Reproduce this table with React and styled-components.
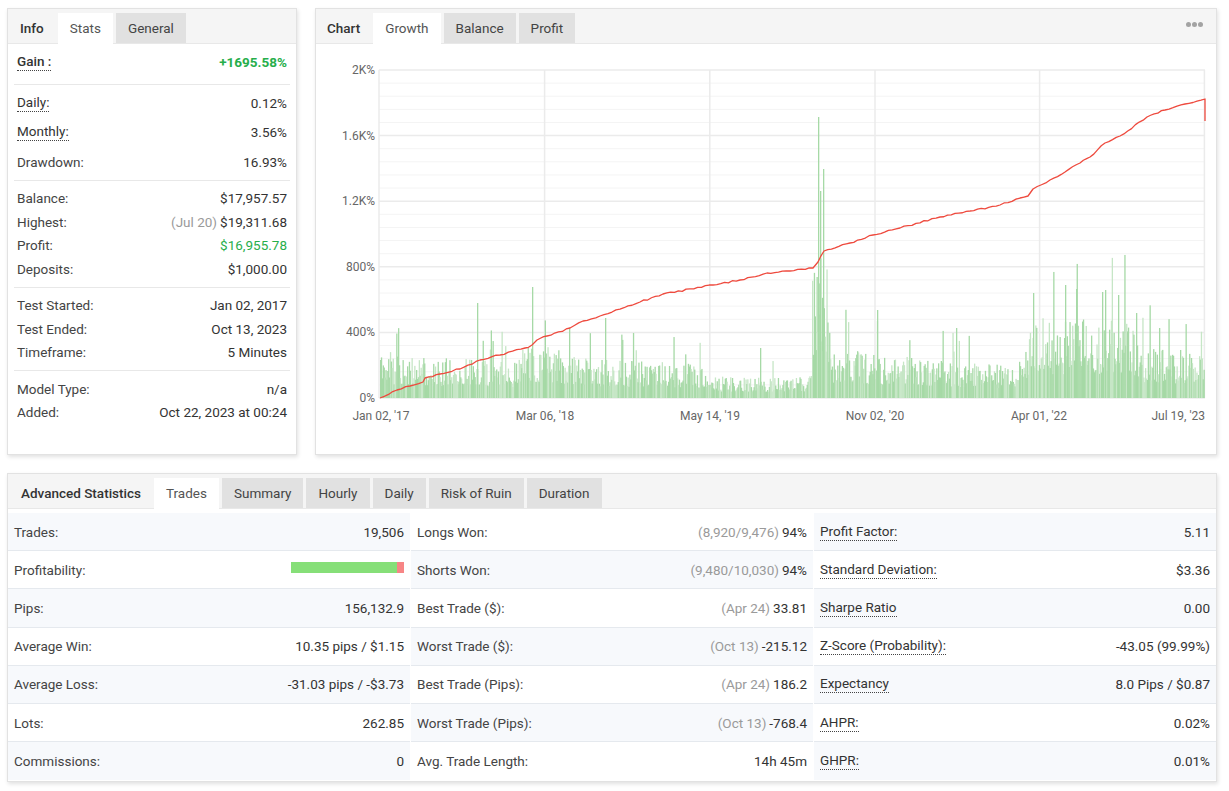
import React from "react";
import styled, { createGlobalStyle } from "styled-components";

const GlobalStyle = createGlobalStyle`
  body {
    margin: 0;
    background: #fff;
    font-family: Roboto, "Liberation Sans", Arial, sans-serif;
    font-size: 13.5px;
    color: #444;
  }
`;

const Page = styled.div`
  display: flex;
  flex-direction: column;
  gap: 18px;
  padding: 8px 12px 10px 7px;
`;

const TopRow = styled.div`
  display: grid;
  grid-template-columns: 290px 1fr;
  gap: 18px;
  height: 447px;
`;

const Card = styled.div`
  display: flex;
  flex-direction: column;
  min-width: 0;
  box-sizing: border-box;
  background: #fff;
  border: 1px solid #e2e2e2;
  box-shadow: 1px 2px 4px rgba(0, 0, 0, 0.12);
  ${(p) => p.$height && `height: ${p.$height}px;`}
`;

const TabBar = styled.div`
  display: flex;
  align-items: flex-end;
  flex-shrink: 0;
  height: 34px;
  background: #f5f5f5;
  border-bottom: 1px solid #e8e8e8;
`;

const TabLabel = styled.div`
  padding: 0 ${(p) => p.$pr}px 0 ${(p) => p.$pl}px;
  line-height: 30px;
  font-weight: 500;
  color: #333;
`;

const Tab = styled.div`
  height: ${(p) => (p.$active ? 31 : 30)}px;
  margin: 0 3px ${(p) => (p.$active ? -1 : 0)}px 0;
  padding: 0 12px;
  line-height: 30px;
  background: ${(p) => (p.$active ? "#fff" : "#e1e1e1")};
  color: ${(p) => (p.$active ? "#555" : "#444")};
`;

const MoreDots = styled.div`
  display: flex;
  gap: 1px;
  align-self: center;
  margin: 0 13px 4px auto;
  span {
    width: 5px;
    height: 5px;
    border-radius: 50%;
    background: #a3a3a3;
  }
`;

/* ---------- info card ---------- */

const InfoBody = styled.div`
  padding: 0 6px;
`;

const Group = styled.div`
  padding: ${(p) => p.$pt}px 0 ${(p) => p.$pb}px;
  & + & {
    border-top: 1px solid #e8e8e8;
  }
`;

const InfoRow = styled.div`
  display: flex;
  justify-content: space-between;
  align-items: center;
  height: ${(p) => p.$h}px;
  padding: 0 3px;
`;

const Label = styled.span`
  color: ${(p) => (p.$strong ? "#333" : "#444")};
  font-weight: ${(p) => (p.$strong ? 500 : 400)};
  ${(p) =>
    p.$dotted &&
    `border-bottom: 1px dotted #444; padding-bottom: 1px; color: #333;`}
`;

const Value = styled.span`
  color: ${(p) => (p.$green ? "#27ae4b" : "#333")};
  font-weight: ${(p) => (p.$bold ? 700 : 400)};
  white-space: nowrap;
`;

const Muted = styled.span`
  color: #9a9a9a;
  margin-right: 3px;
`;

/* ---------- chart ---------- */

const ChartBody = styled.div`
  flex: 1;
  svg {
    display: block;
  }
`;

/* ---------- advanced stats ---------- */

const StatGrid = styled.div`
  display: grid;
  grid-template-columns: repeat(3, 1fr);
  column-gap: 1px;
  padding-top: 4px;
`;

const Cell = styled.div`
  display: flex;
  justify-content: space-between;
  align-items: center;
  box-sizing: border-box;
  height: 38.2px;
  padding: 0 6px;
  background: ${(p) => (p.$shade ? "#f7f9fc" : "#fff")};
  border-bottom: ${(p) => (p.$last ? "none" : "1px solid #e5e9ee")};
`;

const ProfitBar = styled.div`
  display: flex;
  width: 113px;
  height: 11px;
  margin-top: -5px;
`;

const BarPart = styled.div`
  flex: ${(p) => p.$grow};
  background: ${(p) => p.$color};
`;

/* ---------- chart data ---------- */

function mulberry32(a) {
  return function () {
    a |= 0;
    a = (a + 0x6d2b79f5) | 0;
    let t = Math.imul(a ^ (a >>> 15), 1 | a);
    t = (t + Math.imul(t ^ (t >>> 7), 61 | t)) ^ t;
    return ((t ^ (t >>> 14)) >>> 0) / 4294967296;
  };
}

const ENVELOPE = [
  [380, 62], [388, 48], [400, 40], [470, 40], [515, 36], [525, 55], [560, 50],
  [575, 40], [700, 34], [712, 22], [790, 20], [811, 22], [814, 150], [826, 150],
  [830, 50], [900, 42], [960, 36], [1015, 32], [1025, 50], [1033, 80], [1130, 78],
  [1140, 52], [1205, 46],
];

const SPIKES = [
  [477, 95], [532, 111], [818, 281], [820, 207], [823, 229], [877, 88],
  [956, 70], [1033, 105], [1065, 113], [1076, 109], [1102, 106], [1105, 108],
  [1118, 103], [1136, 85], [1159, 70], [605, 80], [760, 50], [1180, 48],
];

function envAt(x) {
  for (let i = 0; i < ENVELOPE.length - 1; i++) {
    const [x0, y0] = ENVELOPE[i];
    const [x1, y1] = ENVELOPE[i + 1];
    if (x >= x0 && x <= x1) return y0 + ((y1 - y0) * (x - x0)) / (x1 - x0);
  }
  return 40;
}

const BARS = (() => {
  const r = mulberry32(11);
  const out = [];
  for (let x = 380; x < 1204; x += 0.9) {
    const e = envAt(x);
    let h = e * (0.3 + 0.7 * Math.pow(r(), 1.2));
    if (r() < 0.05) h = e * (1.25 + 0.6 * r());
    out.push({ x, h, light: r() < 0.4 });
  }
  SPIKES.forEach(([x, h]) => out.push({ x, h, light: false }));
  return out;
})();

const GROWTH_KEYS = [
  [380, 398], [397, 390], [410, 386], [423, 382], [425, 378], [440, 374],
  [460, 369], [480, 360], [500, 355], [525, 348], [532, 345], [537, 340],
  [547, 336], [570, 328], [583, 321], [600, 316], [640, 302], [663, 294],
  [713, 285], [740, 280], [767, 273], [790, 271], [813, 268], [818, 262],
  [824, 251], [850, 243], [873, 235], [900, 228], [940, 217], [970, 211],
  [1000, 205], [1028, 196], [1033, 189], [1050, 180], [1065, 172],
  [1080, 163], [1090, 157], [1105, 143], [1120, 136], [1147, 117],
  [1165, 110], [1185, 104], [1205, 99],
];

const GROWTH = (() => {
  const r = mulberry32(5);
  const pts = [];
  for (let i = 0; i < GROWTH_KEYS.length - 1; i++) {
    const [x0, y0] = GROWTH_KEYS[i];
    const [x1, y1] = GROWTH_KEYS[i + 1];
    const steps = Math.max(1, Math.round((x1 - x0) / 4));
    for (let s = 0; s < steps; s++) {
      const t = s / steps;
      const jitter = s === 0 ? 0 : (r() - 0.5) * 1.6;
      pts.push([x0 + (x1 - x0) * t, y0 + (y1 - y0) * t + jitter]);
    }
  }
  pts.push([1205, 99], [1205, 121]);
  return pts;
})();

const GRID_X = [379, 544.6, 709.8, 875, 1039.6, 1204.4];
const Y_TICKS = [
  [70, "2K%"], [135.6, "1.6K%"], [201.2, "1.2K%"],
  [266.8, "800%"], [332.4, "400%"], [398, "0%"],
];
const X_LABELS = [
  [381, "Jan 02, '17", "middle"], [545, "Mar 06, '18", "middle"],
  [710, "May 14, '19", "middle"], [875, "Nov 02, '20", "middle"],
  [1039, "Apr 01, '22", "middle"], [1205, "Jul 19, '23", "end"],
];

const GrowthChart = () => {
  const minor = [];
  for (let i = 0; i < 5; i++) {
    for (let k = 1; k < 5; k++) minor.push(70 + i * 65.6 + k * 13.12);
  }
  return (
    <svg width="900" height="410" viewBox="316 44 900 410">
      {minor.map((y) => (
        <line key={y} x1="379" x2="1205" y1={y} y2={y} stroke="#f4f4f4" strokeWidth="1" />
      ))}
      {Y_TICKS.map(([y]) => (
        <line key={y} x1="379" x2="1205" y1={y} y2={y} stroke="#ebebeb" strokeWidth="1.5" />
      ))}
      {GRID_X.map((x) => (
        <line key={x} x1={x} x2={x} y1="70" y2="398" stroke="#ebebeb" strokeWidth="1.5" />
      ))}
      {BARS.map((b, i) => (
        <rect
          key={i}
          x={b.x}
          y={398 - b.h}
          width="1.3"
          height={b.h}
          fill={b.light ? "#c6e6c6" : "#a6d9a6"}
        />
      ))}
      <polyline
        points={GROWTH.map((p) => p.join(",")).join(" ")}
        fill="none"
        stroke="#ee4a3e"
        strokeWidth="1.3"
        strokeLinejoin="round"
      />
      {Y_TICKS.map(([y, t]) => (
        <text key={t} x="375" y={y + 4} textAnchor="end" fontSize="12" fill="#666" fontFamily="Roboto, sans-serif">
          {t}
        </text>
      ))}
      {X_LABELS.map(([x, t, a]) => (
        <text key={t} x={x} y="420" textAnchor={a} fontSize="12" fill="#666" fontFamily="Roboto, sans-serif">
          {t}
        </text>
      ))}
    </svg>
  );
};

/* ---------- data ---------- */

const INFO_GROUPS = [
  { pt: 4, pb: 8, h: 28, rows: [{ label: "Gain :", strong: true, dotted: true, value: "+1695.58%", green: true, bold: true }] },
  {
    pt: 3, pb: 3, h: 29.5,
    rows: [
      { label: "Daily:", dotted: true, value: "0.12%" },
      { label: "Monthly:", dotted: true, value: "3.56%" },
      { label: "Drawdown:", value: "16.93%" },
    ],
  },
  {
    pt: 6, pb: 6, h: 23.5,
    rows: [
      { label: "Balance:", value: "$17,957.57" },
      { label: "Highest:", muted: "(Jul 20)", value: "$19,311.68" },
      { label: "Profit:", value: "$16,955.78", green: true },
      { label: "Deposits:", value: "$1,000.00" },
    ],
  },
  {
    pt: 6, pb: 6, h: 23.5,
    rows: [
      { label: "Test Started:", value: "Jan 02, 2017" },
      { label: "Test Ended:", value: "Oct 13, 2023" },
      { label: "Timeframe:", value: "5 Minutes" },
    ],
  },
  {
    pt: 6, pb: 6, h: 23.5,
    rows: [
      { label: "Model Type:", value: "n/a" },
      { label: "Added:", value: "Oct 22, 2023 at 00:24" },
    ],
  },
];

const STATS = [
  [
    { label: "Trades:", value: "19,506" },
    { label: "Longs Won:", muted: "(8,920/9,476)", value: "94%" },
    { label: "Profit Factor:", dotted: true, value: "5.11" },
  ],
  [
    { label: "Profitability:", bar: 94 },
    { label: "Shorts Won:", muted: "(9,480/10,030)", value: "94%" },
    { label: "Standard Deviation:", dotted: true, value: "$3.36" },
  ],
  [
    { label: "Pips:", value: "156,132.9" },
    { label: "Best Trade ($):", muted: "(Apr 24)", value: "33.81" },
    { label: "Sharpe Ratio", dotted: true, value: "0.00" },
  ],
  [
    { label: "Average Win:", value: "10.35 pips / $1.15" },
    { label: "Worst Trade ($):", muted: "(Oct 13)", value: "-215.12" },
    { label: "Z-Score (Probability):", dotted: true, value: "-43.05 (99.99%)" },
  ],
  [
    { label: "Average Loss:", value: "-31.03 pips / -$3.73" },
    { label: "Best Trade (Pips):", muted: "(Apr 24)", value: "186.2" },
    { label: "Expectancy", dotted: true, value: "8.0 Pips / $0.87" },
  ],
  [
    { label: "Lots:", value: "262.85" },
    { label: "Worst Trade (Pips):", muted: "(Oct 13)", value: "-768.4" },
    { label: "AHPR:", dotted: true, value: "0.02%" },
  ],
  [
    { label: "Commissions:", value: "0" },
    { label: "Avg. Trade Length:", value: "14h 45m" },
    { label: "GHPR:", dotted: true, value: "0.01%" },
  ],
];

const ADV_TABS = ["Trades", "Summary", "Hourly", "Daily", "Risk of Ruin", "Duration"];

const App = () => {
  return (
    <>
      <GlobalStyle />
      <Page>
        <TopRow>
          <Card>
            <TabBar>
              <TabLabel $pl={12} $pr={14}>Info</TabLabel>
              <Tab $active>Stats</Tab>
              <Tab>General</Tab>
            </TabBar>
            <InfoBody>
              {INFO_GROUPS.map((g, gi) => (
                <Group key={gi} $pt={g.pt} $pb={g.pb}>
                  {g.rows.map((r) => (
                    <InfoRow key={r.label} $h={g.h}>
                      <Label $strong={r.strong} $dotted={r.dotted}>{r.label}</Label>
                      <Value $green={r.green} $bold={r.bold}>
                        {r.muted && <Muted>{r.muted}</Muted>}
                        {r.value}
                      </Value>
                    </InfoRow>
                  ))}
                </Group>
              ))}
            </InfoBody>
          </Card>

          <Card>
            <TabBar>
              <TabLabel $pl={11} $pr={13}>Chart</TabLabel>
              <Tab $active>Growth</Tab>
              <Tab>Balance</Tab>
              <Tab>Profit</Tab>
              <MoreDots>
                <span />
                <span />
                <span />
              </MoreDots>
            </TabBar>
            <ChartBody>
              <GrowthChart />
            </ChartBody>
          </Card>
        </TopRow>

        <Card $height={309}>
          <TabBar>
            <TabLabel $pl={13} $pr={13}>Advanced Statistics</TabLabel>
            {ADV_TABS.map((t, i) => (
              <Tab key={t} $active={i === 0}>{t}</Tab>
            ))}
          </TabBar>
          <StatGrid>
            {STATS.map((row, ri) =>
              row.map((c, ci) => (
                <Cell key={c.label} $shade={(ri + ci) % 2 === 0} $last={ri === STATS.length - 1}>
                  <Label $dotted={c.dotted}>{c.label}</Label>
                  {c.bar ? (
                    <ProfitBar>
                      <BarPart $grow={c.bar} $color="#86df78" />
                      <BarPart $grow={100 - c.bar} $color="#f78585" />
                    </ProfitBar>
                  ) : (
                    <Value>
                      {c.muted && <Muted>{c.muted}</Muted>}
                      {c.value}
                    </Value>
                  )}
                </Cell>
              ))
            )}
          </StatGrid>
        </Card>
      </Page>
    </>
  );
};

export default App;
